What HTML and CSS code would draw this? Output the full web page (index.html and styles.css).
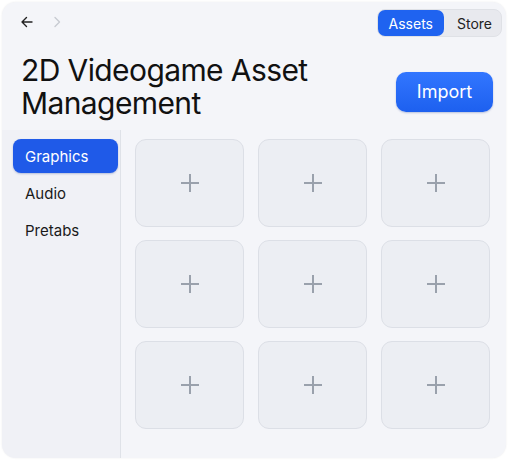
FILE: index.html
```html
<!DOCTYPE html>
<html>
<head>
<meta charset="utf-8">
<link rel="stylesheet" href="styles.css">
</head>
<body>
<div class="window">
  <div class="topbar">
    <div class="nav">
      <svg class="nav-icon" width="14" height="14" viewBox="0 0 14 14"><path d="M12 7H2M6.5 2.5L2 7l4.5 4.5" fill="none" stroke="#222" stroke-width="1.4" stroke-linecap="round" stroke-linejoin="round"/></svg>
      <svg class="nav-icon fwd" width="14" height="14" viewBox="0 0 14 14"><path d="M5 2.5L9.5 7 5 11.5" fill="none" stroke="#c8cbd2" stroke-width="1.4" stroke-linecap="round" stroke-linejoin="round"/></svg>
    </div>
    <div class="segment">
      <span class="seg active">Assets</span>
      <span class="seg">Store</span>
    </div>
  </div>
  <div class="header">
    <h1 class="title">2D Videogame Asset<br>Management</h1>
    <button class="import">Import</button>
  </div>
  <div class="main">
    <div class="sidebar">
      <div class="item active">Graphics</div>
      <div class="item">Audio</div>
      <div class="item">Pretabs</div>
    </div>
    <div class="grid">
      <div class="card"><svg width="20" height="20" viewBox="0 0 20 20"><path d="M10 1v18M1 10h18" stroke="#9aa1ac" stroke-width="2"/></svg></div>
      <div class="card"><svg width="20" height="20" viewBox="0 0 20 20"><path d="M10 1v18M1 10h18" stroke="#9aa1ac" stroke-width="2"/></svg></div>
      <div class="card"><svg width="20" height="20" viewBox="0 0 20 20"><path d="M10 1v18M1 10h18" stroke="#9aa1ac" stroke-width="2"/></svg></div>
      <div class="card"><svg width="20" height="20" viewBox="0 0 20 20"><path d="M10 1v18M1 10h18" stroke="#9aa1ac" stroke-width="2"/></svg></div>
      <div class="card"><svg width="20" height="20" viewBox="0 0 20 20"><path d="M10 1v18M1 10h18" stroke="#9aa1ac" stroke-width="2"/></svg></div>
      <div class="card"><svg width="20" height="20" viewBox="0 0 20 20"><path d="M10 1v18M1 10h18" stroke="#9aa1ac" stroke-width="2"/></svg></div>
      <div class="card"><svg width="20" height="20" viewBox="0 0 20 20"><path d="M10 1v18M1 10h18" stroke="#9aa1ac" stroke-width="2"/></svg></div>
      <div class="card"><svg width="20" height="20" viewBox="0 0 20 20"><path d="M10 1v18M1 10h18" stroke="#9aa1ac" stroke-width="2"/></svg></div>
      <div class="card"><svg width="20" height="20" viewBox="0 0 20 20"><path d="M10 1v18M1 10h18" stroke="#9aa1ac" stroke-width="2"/></svg></div>
    </div>
  </div>
</div>
</body>
</html>
```
FILE: styles.css
```css
html, body {
  margin: 0;
  padding: 0;
  background: #ffffff;
}
body {
  font-family: Inter, "Noto Sans", sans-serif;
  color: #111;
}
.window {
  margin: 2px;
  width: 504px;
  height: 456px;
  border-radius: 14px;
  background: #f4f5f9;
  box-shadow: 0 0 2px rgba(0,0,0,0.08);
  overflow: hidden;
  display: flex;
  flex-direction: column;
}
.topbar {
  display: flex;
  justify-content: space-between;
  align-items: flex-start;
  padding: 7px 4px 0 18px;
  height: 34px;
}
.nav {
  display: flex;
  gap: 16px;
  padding-top: 6px;
}
.segment {
  display: flex;
  background: #e8e9ee;
  border: 1px solid #dfe1e6;
  border-radius: 8px;
  height: 26px;
  align-items: stretch;
}
.seg {
  font-size: 14px;
  display: flex;
  align-items: center;
  padding: 0 9px 0 13px;
  color: #222;
}
.seg.active {
  background: #1f63f0;
  color: #fff;
  border-radius: 7px;
  padding: 0 11px;
}
.header {
  display: flex;
  justify-content: space-between;
  align-items: center;
  padding: 0 13px 0 19px;
  height: 87px;
}
.title {
  margin: 0;
  font-size: 30px;
  font-weight: 400;
  line-height: 33px;
  letter-spacing: -0.6px;
}
.import {
  font-family: Inter, "Noto Sans", sans-serif;
  width: 97px;
  height: 40px;
  border: none;
  border-radius: 10px;
  background: linear-gradient(#3276ff, #1d60ef);
  color: #fff;
  font-size: 18px;
  box-shadow: 0 1px 2px rgba(0,40,140,0.25);
  margin-top: 10px;
}
.main {
  flex: 1;
  display: flex;
}
.sidebar {
  width: 119px;
  background: #f0f1f6;
  border-right: 1px solid #dfe2e8;
  padding: 9px 2px 0 11px;
  box-sizing: border-box;
}
.item {
  height: 34px;
  display: flex;
  align-items: center;
  padding-left: 12px;
  font-size: 15px;
  color: #1a1a1a;
  margin-bottom: 3px;
}
.item.active {
  background: #1f5ae8;
  color: #fff;
  border-radius: 8px;
  box-shadow: 0 1px 2px rgba(0,40,140,0.25);
}
.grid {
  flex: 1;
  display: grid;
  grid-template-columns: repeat(3, 109px);
  grid-auto-rows: 88px;
  column-gap: 14px;
  row-gap: 13px;
  padding: 9px 0 0 14px;
}
.card {
  background: #eceef3;
  border: 1px solid #dcdfe6;
  border-radius: 11px;
  display: flex;
  align-items: center;
  justify-content: center;
  box-sizing: border-box;
}
```
